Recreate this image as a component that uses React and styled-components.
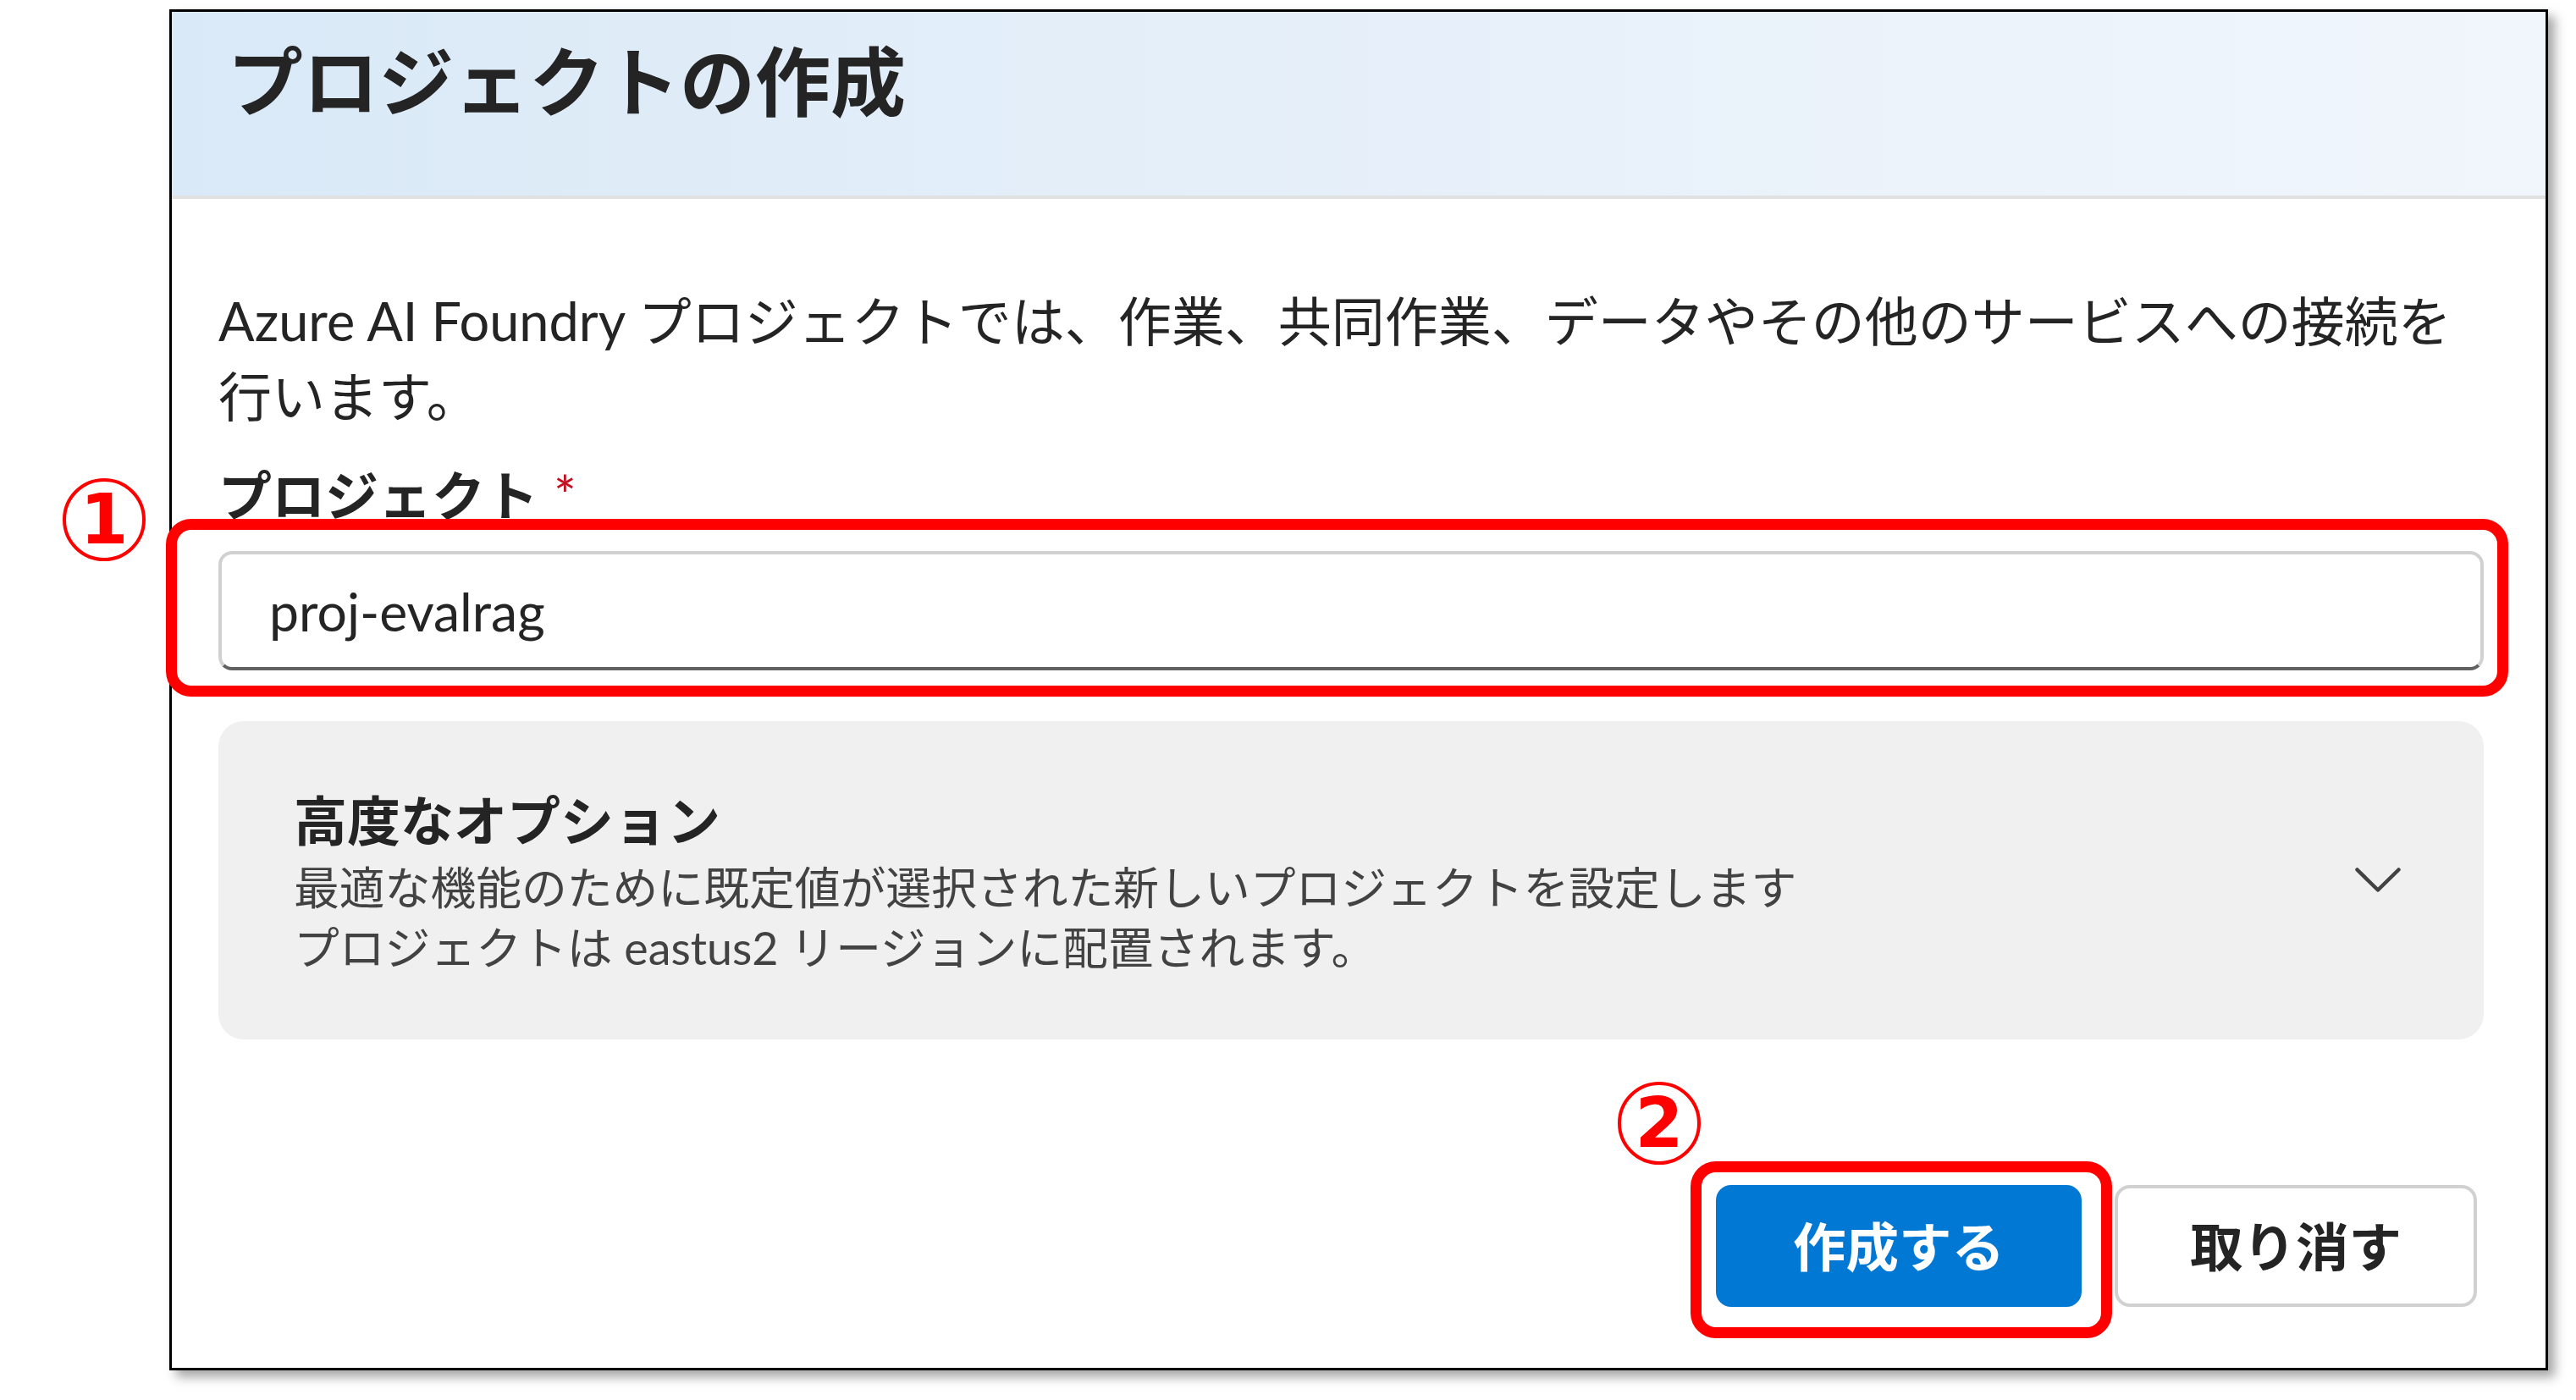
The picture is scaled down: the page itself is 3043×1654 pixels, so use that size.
import React from "react";
import styled, { createGlobalStyle } from "styled-components";

const GlobalStyle = createGlobalStyle`
  html, body {
    margin: 0;
    padding: 0;
    background: #fff;
  }
  body {
    font-family: Lato, "Noto Sans CJK JP", sans-serif;
    color: #242424;
  }
`;

const Page = styled.div`
  width: 3043px;
  height: 1654px;
  box-sizing: border-box;
  padding: 11px 0 0 200px;
  overflow: hidden;
`;

const Dialog = styled.section`
  width: 2810px;
  box-sizing: border-box;
  border: 3px solid #000;
  background: #fff;
  box-shadow: 8px 8px 12px rgba(0, 0, 0, 0.35);
  display: flex;
  flex-direction: column;
`;

const Header = styled.header`
  height: 221px;
  box-sizing: border-box;
  padding: 20px 0 0 66px;
  background: linear-gradient(90deg, #d9e9f7 0%, #e5eff9 45%, #f1f6fc 100%);
  border-bottom: 4px solid #e1e1e1;
`;

const Title = styled.h1`
  margin: 0;
  font-size: 89px;
  line-height: 124px;
  font-weight: 700;
  color: #242424;
`;

const Body = styled.div`
  display: flex;
  flex-direction: column;
  padding: 99px 73px 0 55px;
`;

const Intro = styled.p`
  margin: 0;
  padding-right: 30px;
  font-size: 63px;
  line-height: 89px;
`;

const Label = styled.label`
  display: block;
  margin: 28px 0 22px;
  font-size: 63px;
  line-height: 89px;
  font-weight: 700;
`;

const Required = styled.span`
  margin-left: 18px;
  color: #c50f1f;
  font-weight: 400;
`;

const Field = styled.div`
  position: relative;
`;

const TextInput = styled.input`
  display: block;
  width: 100%;
  height: 141px;
  box-sizing: border-box;
  padding: 0 0 0 56px;
  border: 4px solid #d1d1d1;
  border-bottom-color: #616161;
  border-radius: 16px;
  background: #fff;
  color: #242424;
  font: 400 62.5px/89px Lato, "Noto Sans CJK JP", sans-serif;
  outline: none;
`;

const Callout = styled.span`
  position: absolute;
  top: ${(p) => p.$top}px;
  right: ${(p) => p.$right}px;
  bottom: ${(p) => p.$bottom}px;
  left: ${(p) => p.$left}px;
  border: 13px solid #ff0000;
  border-radius: 30px;
  pointer-events: none;
`;

const StepBadge = styled.span`
  position: absolute;
  top: ${(p) => p.$top}px;
  left: ${(p) => p.$left}px;
  width: 98px;
  height: 98px;
  box-sizing: border-box;
  border: 4px solid #ff0000;
  border-radius: 50%;
  display: flex;
  align-items: center;
  justify-content: center;
  color: #ff0000;
  font: 700 82px/1 "DejaVu Sans", sans-serif;
`;

const Options = styled.div`
  margin-top: 60px;
  display: flex;
  align-items: center;
  justify-content: space-between;
  padding: 72px 98px 73px 89px;
  background: #f0f0f0;
  border-radius: 30px;
`;

const OptionsTitle = styled.div`
  font-size: 63px;
  line-height: 89px;
  font-weight: 700;
`;

const OptionsDesc = styled.div`
  font-size: 53.8px;
  line-height: 71px;
  color: #424242;
`;

const Footer = styled.footer`
  display: flex;
  justify-content: flex-end;
  gap: 39px;
  padding: 172px 81px 72px 0;
`;

const ActionWrap = styled.div`
  position: relative;
`;

const Button = styled.button`
  height: 144px;
  min-width: ${(p) => (p.$primary ? 432 : 428)}px;
  box-sizing: border-box;
  padding: 0 40px;
  border: 4px solid ${(p) => (p.$primary ? "transparent" : "#d1d1d1")};
  border-radius: 18px;
  background: ${(p) => (p.$primary ? "#0078d4" : "#fff")};
  color: ${(p) => (p.$primary ? "#fff" : "#242424")};
  font: 700 62.5px/89px Lato, "Noto Sans CJK JP", sans-serif;
`;

const Chevron = () => (
  <svg width="54" height="30" viewBox="0 0 54 30">
    <path
      d="M2.5 2.5 L27 26.5 L51.5 2.5"
      fill="none"
      stroke="#424242"
      strokeWidth="4.5"
      strokeLinecap="round"
      strokeLinejoin="round"
    />
  </svg>
);

export default function App() {
  return (
    <Page>
      <GlobalStyle />
      <Dialog>
        <Header>
          <Title>プロジェクトの作成</Title>
        </Header>
        <Body>
          <Intro>
            Azure AI Foundry プロジェクトでは、作業、共同作業、データやその他のサービスへの接続を行います。
          </Intro>
          <Label htmlFor="project-name">
            プロジェクト<Required>*</Required>
          </Label>
          <Field>
            <TextInput id="project-name" readOnly defaultValue="proj-evalrag" />
            <Callout $top={-38} $right={-29} $bottom={-31} $left={-62} />
            <StepBadge $top={-86} $left={-184}>1</StepBadge>
          </Field>
          <Options>
            <div>
              <OptionsTitle>高度なオプション</OptionsTitle>
              <OptionsDesc>
                最適な機能のために既定値が選択された新しいプロジェクトを設定します
                <br />
                プロジェクトは eastus2 リージョンに配置されます。
              </OptionsDesc>
            </div>
            <Chevron />
          </Options>
        </Body>
        <Footer>
          <ActionWrap>
            <Button $primary>作成する</Button>
            <Callout $top={-28} $right={-36} $bottom={-37} $left={-30} />
            <StepBadge $top={-122} $left={-116}>2</StepBadge>
          </ActionWrap>
          <Button>取り消す</Button>
        </Footer>
      </Dialog>
    </Page>
  );
}
